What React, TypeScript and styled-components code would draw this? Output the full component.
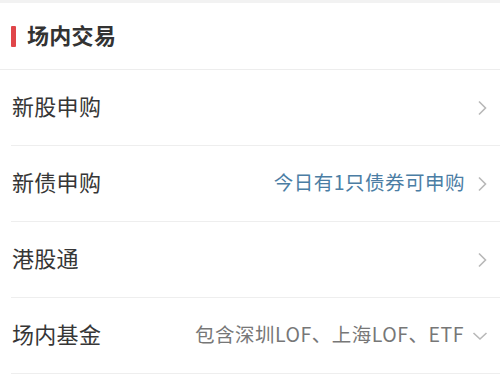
import styled, { createGlobalStyle } from "styled-components";

const GlobalStyle = createGlobalStyle`
  body {
    margin: 0;
    background: #ffffff;
    font-family: "Noto Sans CJK SC", "Noto Sans", sans-serif;
  }
`;

const Page = styled.div`
  width: 500px;
  height: 378px;
  overflow: hidden;
  background: #ffffff;
  border-top: 3px solid #f2f2f2;
  box-sizing: border-box;
`;

const Header = styled.div`
  display: flex;
  align-items: center;
  gap: 11px;
  height: 66px;
  padding-left: 11px;
  border-bottom: 1px solid #ededed;
`;

const RedBar = styled.span`
  width: 5px;
  height: 21px;
  background: #e0464a;
  border-radius: 1px;
`;

const Title = styled.h2`
  margin: 0 0 4px;
  font-size: 22px;
  font-weight: 700;
  color: #333333;
  letter-spacing: 0.3px;
`;

const List = styled.div`
  padding-left: 11px;
`;

const Row = styled.div`
  display: flex;
  align-items: center;
  height: 75px;
  padding-right: 12px;
  border-bottom: 1px solid #eeeeee;
`;

const Label = styled.span`
  flex: 1;
  margin-bottom: 5px;
  padding-left: 1px;
  font-size: 22px;
  color: #363636;
  letter-spacing: 0.3px;
`;

const Note = styled.span<{ $tone: "blue" | "gray"; $gap: number }>`
  margin: 0 ${(p) => p.$gap}px 5px 0;
  font-size: 19.5px;
  letter-spacing: 0.5px;
  color: ${(p) => (p.$tone === "blue" ? "#4b7da4" : "#777777")};
`;

const Icon = styled.svg`
  display: block;
  flex-shrink: 0;
`;

function ChevronRight() {
  return (
    <Icon width="12" height="16" viewBox="0 0 12 16">
      <path d="M3 1.5 L9.5 8 L3 14.5" fill="none" stroke="#b8b8b8" strokeWidth="1.6" />
    </Icon>
  );
}

function ChevronDown() {
  return (
    <Icon width="16" height="12" viewBox="0 0 16 12">
      <path d="M1.5 3 L8 9 L14.5 3" fill="none" stroke="#b8b8b8" strokeWidth="1.6" />
    </Icon>
  );
}

const rows: { label: string; note?: string; tone?: "blue" | "gray"; down?: boolean }[] = [
  { label: "新股申购" },
  { label: "新债申购", note: "今日有1只债券可申购", tone: "blue" },
  { label: "港股通" },
  { label: "场内基金", note: "包含深圳LOF、上海LOF、ETF", tone: "gray", down: true },
];

export default function App() {
  return (
    <>
      <GlobalStyle />
      <Page>
        <Header>
          <RedBar />
          <Title>场内交易</Title>
        </Header>
        <List>
          {rows.map((r) => (
            <Row key={r.label}>
              <Label>{r.label}</Label>
              {r.note && (
                <Note $tone={r.tone ?? "gray"} $gap={r.down ? 8 : 11}>
                  {r.note}
                </Note>
              )}
              {r.down ? <ChevronDown /> : <ChevronRight />}
            </Row>
          ))}
        </List>
      </Page>
    </>
  );
}
